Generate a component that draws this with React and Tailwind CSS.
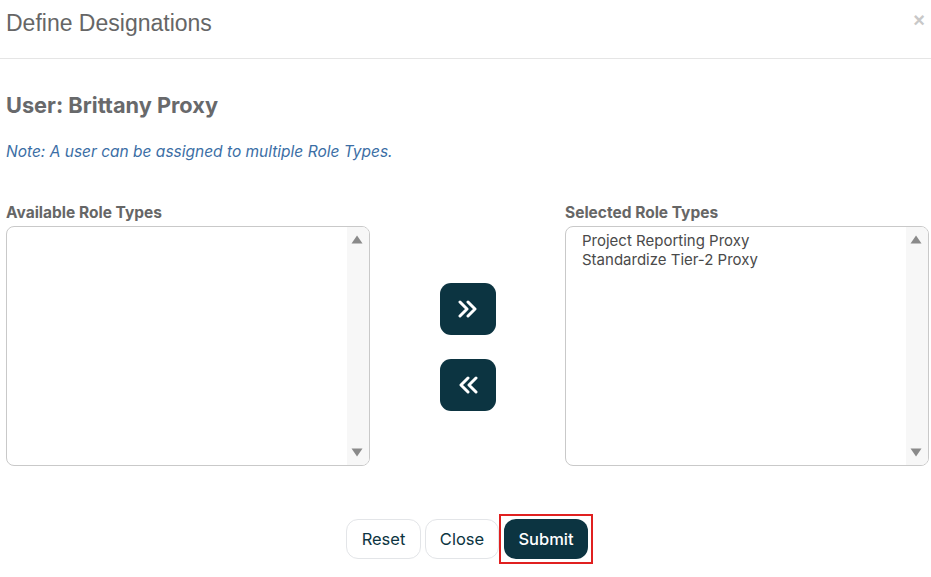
import React from 'react'

const ScrollTrack = () => (
  <div className="flex w-[22px] flex-col items-center justify-between bg-[#f7f7f7] py-[8px] pr-[2px]">
    <svg width="12" height="9" viewBox="0 0 12 9">
      <path d="M6 0.5L11.5 8.5H0.5z" fill="#8a8a8a" strokeLinejoin="round" />
    </svg>
    <svg width="12" height="9" viewBox="0 0 12 9">
      <path d="M0.5 0.5H11.5L6 8.5z" fill="#8a8a8a" strokeLinejoin="round" />
    </svg>
  </div>
)

const ListBox = ({ items }) => (
  <div className="flex h-[240px] w-[364px] overflow-hidden rounded-[8px] border border-[#c9c9c9]">
    <ul className="flex-1 px-[16px] pt-[4px] text-[15px] leading-[19px] text-[#4a4a4a]">
      {items.map((item) => (
        <li key={item}>{item}</li>
      ))}
    </ul>
    <ScrollTrack />
  </div>
)

const ArrowButton = ({ dir }) => (
  <button className="flex h-[52px] w-[56px] items-center justify-center rounded-[11px] bg-[#0c3441]">
    <svg width="22" height="18" viewBox="0 0 22 18" fill="none" stroke="#ffffff" strokeWidth="3" strokeLinecap="round" strokeLinejoin="round">
      {dir === 'right' ? (
        <path d="M3 2l7 7-7 7M11 2l7 7-7 7" />
      ) : (
        <path d="M19 2l-7 7 7 7M11 2l-7 7 7 7" />
      )}
    </svg>
  </button>
)

export default function App() {
  return (
    <div className="w-[931px] h-[577px] overflow-hidden bg-white font-['Inter',sans-serif]">
      {/* Header */}
      <div className="flex h-[59px] items-start justify-between border-b border-[#e5e5e5] pl-[6px] pr-[6px]">
        <h1 className="pt-[10px] font-['Liberation_Sans',Arial,sans-serif] text-[23px] leading-[26px] text-[#666666]">
          Define Designations
        </h1>
        <span className="pt-[8px] font-['Liberation_Sans',Arial,sans-serif] text-[20px] font-bold leading-[24px] text-[#c8c8c8]">
          ×
        </span>
      </div>

      {/* Body */}
      <div className="pl-[6px] pr-[2px]">
        <h2 className="mt-[32px] text-[21.75px] font-bold leading-[28px] text-[#68696b]">User: Brittany Proxy</h2>
        <p className="mt-[23px] text-[15.5px] italic leading-[20px] text-[#3b6ea5]">
          Note: A user can be assigned to multiple Role Types.
        </p>

        <div className="mt-[41px] flex items-stretch">
          <div className="flex flex-col">
            <label className="text-[15.5px] font-bold leading-[20px] text-[#666666]">Available Role Types</label>
            <div className="mt-[3px]">
              <ListBox items={[]} />
            </div>
          </div>

          <div className="flex flex-1 flex-col items-center justify-center gap-[24px] pt-[25px]">
            <ArrowButton dir="right" />
            <ArrowButton dir="left" />
          </div>

          <div className="flex flex-col">
            <label className="text-[15.5px] font-bold leading-[20px] text-[#666666]">Selected Role Types</label>
            <div className="mt-[3px]">
              <ListBox items={['Project Reporting Proxy', 'Standardize Tier-2 Proxy']} />
            </div>
          </div>
        </div>

        {/* Footer */}
        <div className="mt-[48px] flex items-center justify-center gap-[4px] pl-[4px]">
          <button className="h-[40px] w-[75px] rounded-[12px] border border-[#e3e5e8] text-[16.5px] text-[#0c3441]">
            Reset
          </button>
          <button className="h-[40px] w-[74px] rounded-[12px] border border-[#e3e5e8] text-[16.5px] text-[#0c3441]">
            Close
          </button>
          <div className="-ml-[4px] border-2 border-[#e02020] p-[3px]">
            <button className="h-[40px] w-[84px] rounded-[12px] bg-[#0c3441] text-[16.5px] font-medium text-white">
              Submit
            </button>
          </div>
        </div>
      </div>
    </div>
  )
}
